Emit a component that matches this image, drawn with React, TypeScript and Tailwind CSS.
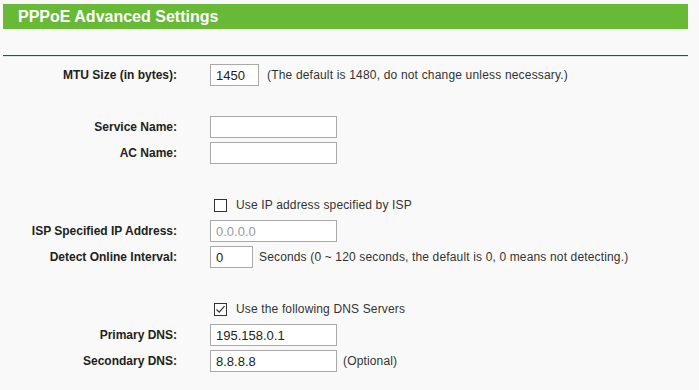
import React from 'react';

const font = { fontFamily: '"Liberation Sans", Arial, sans-serif' };

function Row({ label, children }: { label?: string; children?: React.ReactNode }) {
    return (
        <div className="flex items-center h-[26px]">
            <div className="w-[177px] text-right text-[12px] font-bold text-[#222]">{label}</div>
            <div className="ml-[33px] flex items-center">{children}</div>
        </div>
    );
}

function Field({ value, width = 'w-[127px]', muted }: { value?: string; width?: string; muted?: boolean }) {
    return (
        <input
            readOnly
            value={value ?? ''}
            className={`${width} h-[22px] border border-[#a9a9a9] bg-white px-[5px] text-[13px] outline-none ${muted ? 'text-[#9a9a9a]' : 'text-[#222]'}`}
            style={font}
        />
    );
}

function Check({ checked, text }: { checked?: boolean; text: string }) {
    return (
        <div className="flex items-center">
            <span className="ml-[4px] w-[13px] h-[13px] border border-[#333] bg-white flex items-center justify-center">
                {checked && (
                    <svg width="11" height="11" viewBox="0 0 11 11">
                        <path d="M1.5 5.5 L4.2 8.2 L9.5 2.2" fill="none" stroke="#333" strokeWidth="1.2" />
                    </svg>
                )}
            </span>
            <span className="ml-[9px] text-[12px] tracking-[0.15px] text-[#333]">{text}</span>
        </div>
    );
}

export default function App() {
    return (
        <div className="w-[699px] h-[390px] bg-[#f9f9f9] pt-[4px] overflow-hidden" style={font}>
            <div className="ml-[3px] w-[685px]">
                <div className="h-[25px] bg-[#68b935] flex items-center pl-[15px]">
                    <span className="text-white font-bold text-[16px]">PPPoE Advanced Settings</span>
                </div>
                <div className="mt-[26px] h-px bg-[#1e5c3c]"></div>
                <div className="h-px bg-[#d6ece2]"></div>
            </div>

            <div className="mt-[5px]">
                <Row label="MTU Size (in bytes):">
                    <Field value="1450" width="w-[49px]" />
                    <span className="ml-[8px] text-[12px] tracking-[0.18px] text-[#333]">(The default is 1480, do not change unless necessary.)</span>
                </Row>
                <Row />
                <Row label="Service Name:">
                    <Field />
                </Row>
                <Row label="AC Name:">
                    <Field />
                </Row>
                <Row />
                <Row>
                    <Check text="Use IP address specified by ISP" />
                </Row>
                <Row label="ISP Specified IP Address:">
                    <Field value="0.0.0.0" muted />
                </Row>
                <Row label="Detect Online Interval:">
                    <Field value="0" width="w-[43px]" />
                    <span className="ml-[6px] text-[12px] tracking-[0.15px] text-[#333]">Seconds (0 ~ 120 seconds, the default is 0, 0 means not detecting.)</span>
                </Row>
                <Row />
                <Row>
                    <Check checked text="Use the following DNS Servers" />
                </Row>
                <Row label="Primary DNS:">
                    <Field value="195.158.0.1" />
                </Row>
                <Row label="Secondary DNS:">
                    <Field value="8.8.8.8" />
                    <span className="ml-[6px] text-[12px] tracking-[0.15px] text-[#333]">(Optional)</span>
                </Row>
            </div>
        </div>
    );
}
